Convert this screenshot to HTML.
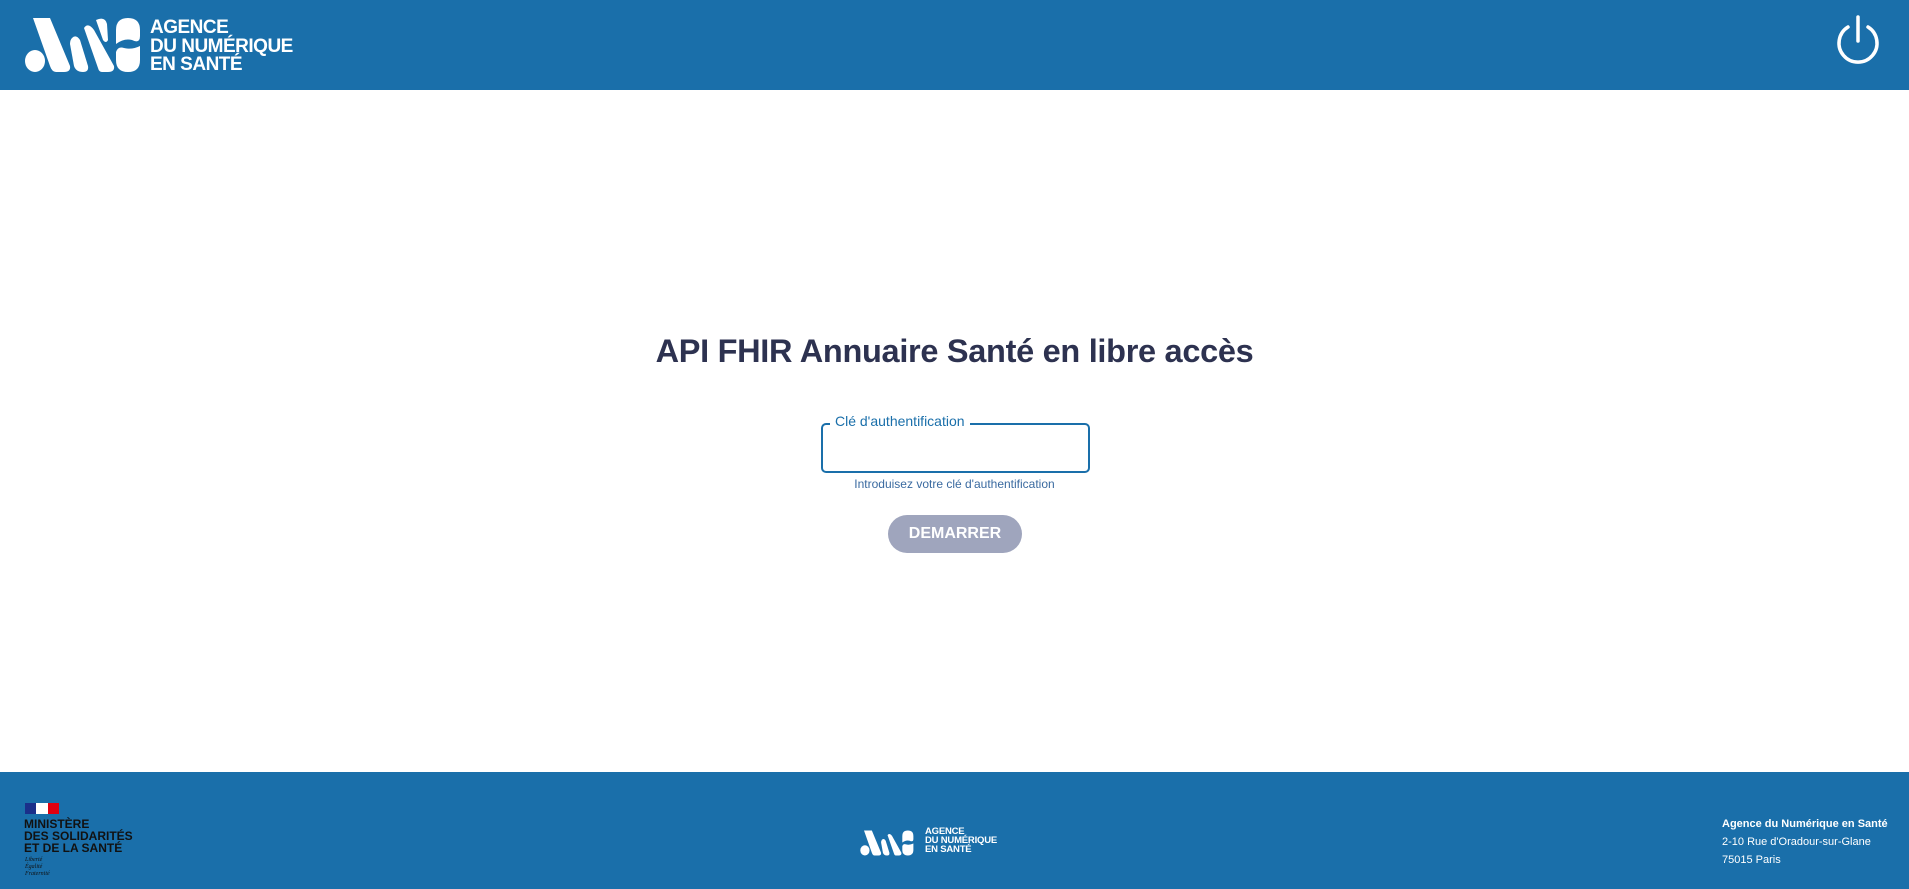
<!DOCTYPE html>
<html><head><meta charset="utf-8"><style>
*{margin:0;padding:0;box-sizing:border-box}
body{width:1909px;height:889px;background:#fff;font-family:"Liberation Sans",sans-serif;position:relative;overflow:hidden}
.hdr{position:absolute;left:0;top:0;width:1909px;height:90px;background:#1a6faa}
.ftr{position:absolute;left:0;top:772px;width:1909px;height:117px;background:#1a6faa}
.lt{position:absolute;color:#fff;font-weight:bold;line-height:18px;font-size:19px;letter-spacing:-0.5px}
h1{position:absolute;left:0;width:1909px;top:333px;text-align:center;font-size:32.5px;color:#2d3250;font-weight:bold;letter-spacing:-0.3px}
.box{position:absolute;left:821px;top:423px;width:269px;height:50px;border:2px solid #1a6faa;border-radius:5px}
.lab{position:absolute;left:830px;top:413px;background:#fff;padding:0 5px;font-size:14px;color:#1a6faa}
.help{position:absolute;left:0;width:1909px;text-align:center;top:477px;font-size:12px;color:#3a6aa0}
.btn{position:absolute;left:888px;top:515px;width:134px;height:38px;border-radius:19px;background:#9fa5bd;color:#fff;font-weight:bold;font-size:16px;text-align:center;line-height:38px}
.ft{position:absolute;color:#fff;font-size:11px;line-height:17px}
</style></head><body>
<div class="hdr">
<svg style="position:absolute;left:0;top:0" width="150" height="90" viewBox="0 0 150 90">
<g fill="#fff">
<ellipse cx="35" cy="61" rx="10" ry="11"/>
<path d="M33 18 L50 18 L70 66 Q71 72 64 72 L56 72 Q52 72 50 66 Z"/>
<path d="M72 38 Q76 34 80 40 L88 66 Q89 72 83 72 Q76 72 74 66 L70 44 Q70 40 72 38Z"/>
<path d="M84 28 Q88 22 94 30 L114 66 Q115 72 108 72 L102 72 Q99 72 98 68 Z"/>
<path d="M96 20 Q105 16 107 24 L108 40 Q106 44 103 40 Z"/>
<path d="M116 44 L116 30 Q116 18 128 18 Q140 18 140 30 L140 36 Q140 44 132 40 Q124 38 116 44Z"/>
<path d="M140 46 L140 60 Q140 72 128 72 Q116 72 116 60 L116 52 Q118 46 124 48 Q132 50 140 46Z"/>
</g></svg>
<div class="lt" style="left:150px;top:19px;line-height:18.5px">AGENCE<br>DU NUMÉRIQUE<br>EN SANTÉ</div>
<svg style="position:absolute;left:1834px;top:14px" width="48" height="54" viewBox="0 0 48 54">
<path d="M14 13 A19 19 0 1 0 34 13" fill="none" stroke="#fff" stroke-width="3.5" stroke-linecap="round"/>
<line x1="24" y1="3" x2="24" y2="27" stroke="#fff" stroke-width="3.5" stroke-linecap="round"/>
</svg>
</div>
<h1>API FHIR Annuaire Santé en libre accès</h1>
<div class="box"></div>
<div class="lab">Clé d'authentification</div>
<div class="help">Introduisez votre clé d'authentification</div>
<div class="btn">DEMARRER</div>
<div class="ftr">
<div style="position:absolute;left:25px;top:31px;width:34px;height:11px;display:flex"><div style="flex:1;background:#1a2f8a"></div><div style="flex:1;background:#fff"></div><div style="flex:1;background:#e1000f"></div></div>
<div style="position:absolute;left:24px;top:46px;font-size:12px;font-weight:bold;line-height:12px;color:#111">MINISTÈRE<br>DES SOLIDARITÉS<br>ET DE LA SANTÉ</div>
<div style="position:absolute;left:25px;top:85px;font-size:6px;line-height:7px;font-style:italic;font-family:'Liberation Serif',serif;color:#111">Liberté<br>Égalité<br>Fraternité</div>
<svg style="position:absolute;left:858px;top:54px" width="60" height="34" viewBox="20 10 130 70">
<g fill="#fff">
<ellipse cx="35" cy="61" rx="10" ry="11"/>
<path d="M33 18 L50 18 L70 66 Q71 72 64 72 L56 72 Q52 72 50 66 Z"/>
<path d="M72 38 Q76 34 80 40 L88 66 Q89 72 83 72 Q76 72 74 66 L70 44 Q70 40 72 38Z"/>
<path d="M84 28 Q88 22 94 30 L114 66 Q115 72 108 72 L102 72 Q99 72 98 68 Z"/>
<path d="M116 44 L116 30 Q116 18 128 18 Q140 18 140 30 L140 36 Q140 44 132 40 Q124 38 116 44Z"/>
<path d="M140 46 L140 60 Q140 72 128 72 Q116 72 116 60 L116 52 Q118 46 124 48 Q132 50 140 46Z"/>
</g></svg>
<div class="lt" style="left:925px;top:55px;font-size:9.5px;line-height:9px;letter-spacing:-0.2px">AGENCE<br>DU NUMÉRIQUE<br>EN SANTÉ</div>
<div class="ft" style="left:1722px;top:44px;font-weight:bold">Agence du Numérique en Santé</div>
<div class="ft" style="left:1722px;top:62px">2-10 Rue d'Oradour-sur-Glane</div>
<div class="ft" style="left:1722px;top:80px">75015 Paris</div>
</div>
</body></html>
